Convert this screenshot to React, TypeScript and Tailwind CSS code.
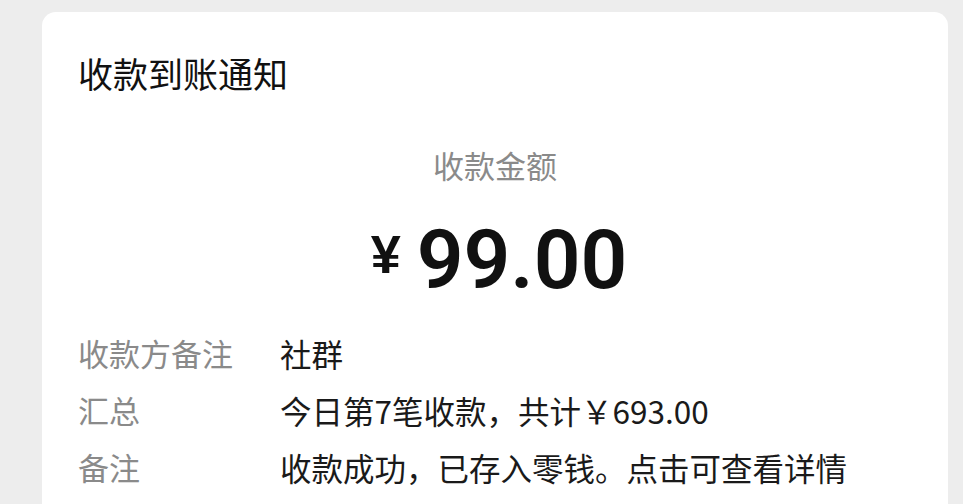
import React from 'react';

const rows = [
  { label: '收款方备注', value: '社群' },
  { label: '汇总', value: '今日第7笔收款，共计￥693.00' },
  { label: '备注', value: '收款成功，已存入零钱。点击可查看详情' },
];

export default function App() {
  return (
    <div
      className="w-[963px] h-[504px] overflow-hidden bg-[#ededed] pt-[12px] pl-[42px] pr-[15px]"
      style={{ fontFamily: '"Noto Sans CJK SC", "Noto Sans", sans-serif' }}
    >
      <div className="bg-white rounded-t-[14px] h-[520px] pl-[36px] pr-[36px]">
        <div className="pt-[36px] text-[35px] leading-[50px] text-[#111]">收款到账通知</div>

        <div className="mt-[45px] text-center text-[31px] leading-[44px] text-[#8a8a8a]">收款金额</div>

        <div className="mt-[28px] pl-[8px] flex items-center justify-center h-[90px] text-[#111]">
          <span
            className="text-[54px] font-bold mr-[16px] mt-[-12px]"
            style={{ fontFamily: '"Liberation Sans", "Noto Sans CJK SC", sans-serif' }}
          >
            ¥
          </span>
          <span
            className="text-[82px] font-semibold"
            style={{ fontFamily: 'Roboto, "Noto Sans", sans-serif' }}
          >
            99.00
          </span>
        </div>

        <div className="mt-[20px] flex flex-col">
          {rows.map((r) => (
            <div key={r.label} className="flex items-center h-[57px]">
              <div className="w-[202px] text-[31px] text-[#8a8a8a]">{r.label}</div>
              <div className="text-[31.5px] text-[#1a1a1a]">{r.value}</div>
            </div>
          ))}
        </div>
      </div>
    </div>
  );
}
